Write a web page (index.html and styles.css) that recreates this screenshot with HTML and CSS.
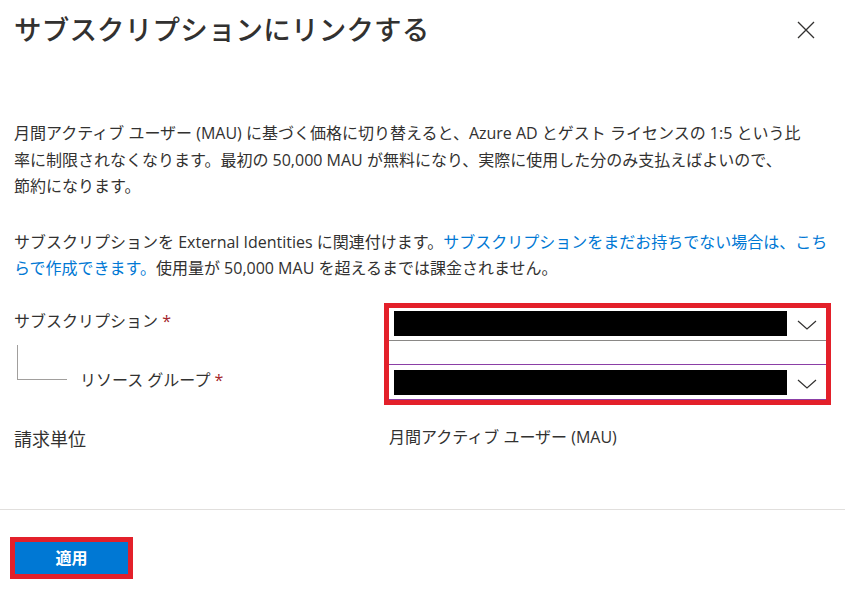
FILE: index.html
```html
<!DOCTYPE html>
<html lang="ja">
<head>
<meta charset="utf-8">
<title>サブスクリプションにリンクする</title>
<link rel="stylesheet" href="styles.css">
</head>
<body>
<div class="panel">
  <header class="header">
    <h1 class="title">サブスクリプションにリンクする</h1>
    <button class="close" aria-label="閉じる">
      <svg width="18" height="18" viewBox="0 0 18 18"><path d="M1 1 L17 17 M17 1 L1 17" stroke="#323130" stroke-width="1.3" fill="none"/></svg>
    </button>
  </header>
  <main class="body">
    <p class="desc">月間アクティブ ユーザー (MAU) に基づく価格に切り替えると、Azure AD とゲスト ライセンスの 1:5 という比<br>率に制限されなくなります。最初の 50,000 MAU が無料になり、実際に使用した分のみ支払えばよいので、<br>節約になります。</p>
    <p class="desc second">サブスクリプションを External Identities に関連付けます。<a class="link" href="#">サブスクリプションをまだお持ちでない場合は、こち<br>らで作成できます。</a>使用量が 50,000 MAU を超えるまでは課金されません。</p>
    <div class="form">
      <div class="labels">
        <div class="label">サブスクリプション <span class="req">*</span></div>
        <div class="sub-row">
          <span class="connector"></span>
          <div class="label sub-label">リソース グループ <span class="req">*</span></div>
        </div>
      </div>
      <div class="redbox">
        <div class="dd dd-first">
          <span class="mask"></span>
          <svg class="chev" width="20" height="10" viewBox="0 0 20 10"><path d="M1 1 L10 9 L19 1" stroke="#323130" stroke-width="1.2" fill="none"/></svg>
        </div>
        <div class="dd dd-second">
          <span class="mask"></span>
          <svg class="chev" width="20" height="10" viewBox="0 0 20 10"><path d="M1 1 L10 9 L19 1" stroke="#323130" stroke-width="1.2" fill="none"/></svg>
        </div>
      </div>
      <div class="label billing">請求単位</div>
      <div class="value">月間アクティブ ユーザー (MAU)</div>
    </div>
  </main>
  <footer class="footer">
    <button class="apply">適用</button>
  </footer>
</div>
</body>
</html>
```
FILE: styles.css
```css
html, body {
  margin: 0;
  padding: 0;
  background: #ffffff;
}
body {
  font-family: "Open Sans", "Noto Sans CJK JP", sans-serif;
  color: #323130;
  font-size: 16px;
}
.panel {
  display: flex;
  flex-direction: column;
  width: 845px;
  height: 590px;
}
.header {
  display: flex;
  justify-content: space-between;
  align-items: center;
  height: 56px;
  padding: 0 30px 0 14px;
}
.title {
  margin: 0;
  font-family: "Noto Sans CJK JP", sans-serif;
  font-size: 27.5px;
  font-weight: 500;
  line-height: 56px;
  color: #323130;
  letter-spacing: 0.2px;
}
.close {
  border: none;
  background: none;
  padding: 0;
  margin-top: 4px;
  width: 18px;
  height: 18px;
  display: flex;
}
.body {
  flex: 1;
  padding: 0 14px;
}
.desc {
  margin: 64px 0 0;
  line-height: 26.5px;
  white-space: nowrap;
}
.desc.second {
  margin-top: 29px;
}
.link {
  color: #0078d4;
  text-decoration: none;
}
.form {
  display: grid;
  grid-template-columns: 370px 447px;
  margin-top: 21px;
}
.labels {
  display: flex;
  flex-direction: column;
}
.label {
  line-height: 24px;
  height: 24px;
}
.labels > .label {
  margin-top: 6px;
}
.req {
  color: #a4262c;
}
.sub-row {
  display: flex;
  margin-top: 12px;
}
.connector {
  width: 50px;
  height: 35px;
  margin-left: 3px;
  border-left: 1px solid #a19f9d;
  border-bottom: 1px solid #a19f9d;
  box-sizing: border-box;
}
.sub-label {
  margin-left: 13px;
  margin-top: 23px;
}
.redbox {
  border: 5px solid #e3202a;
  height: 102px;
  box-sizing: border-box;
  display: flex;
  flex-direction: column;
}
.dd {
  display: flex;
  justify-content: space-between;
  align-items: flex-start;
  box-sizing: border-box;
  padding-left: 5px;
  padding-right: 9px;
}
.dd-first {
  height: 33px;
  border-bottom: 1px solid #8a8886;
  padding-top: 3px;
}
.dd-second {
  height: 36px;
  margin-top: 23px;
  border-top: 1px solid #8b3fa6;
  border-bottom: 1px solid #8b3fa6;
  padding-top: 5px;
}
.mask {
  display: block;
  width: 393px;
  height: 25px;
  background: #000000;
}
.chev {
  margin-top: 9px;
}
.billing {
  margin-top: 22px;
  font-size: 18px;
}
.value {
  margin-top: 20px;
  padding-left: 5px;
  line-height: 24px;
}
.footer {
  border-top: 1px solid #e1dfdd;
  padding: 27px 0 11px 10px;
}
.apply {
  display: block;
  width: 123px;
  height: 42px;
  box-sizing: border-box;
  border: 5px solid #e3202a;
  background: #0078d4;
  color: #ffffff;
  font-family: "Noto Sans CJK JP", sans-serif;
  font-weight: 700;
  font-size: 16px;
  line-height: 30px;
  padding: 0 0 2px;
}
```
